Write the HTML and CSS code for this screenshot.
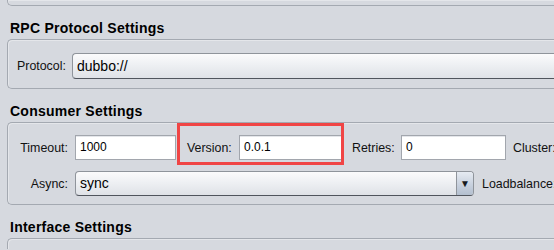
FILE: index.html
```html
<!DOCTYPE html>
<html lang="en">
<head>
  <meta charset="UTF-8">
  <title>Consumer Settings</title>
  <link rel="stylesheet" href="styles.css">
</head>
<body>
  <div class="panel stub"></div>

  <h2 class="section-title">RPC Protocol Settings</h2>
  <div class="panel rpc">
    <div class="row">
      <span class="label protocol-label">Protocol:</span>
      <div class="combo combo-wide">dubbo://</div>
    </div>
  </div>

  <h2 class="section-title">Consumer Settings</h2>
  <div class="panel consumer">
    <div class="row">
      <span class="label col-label">Timeout:</span>
      <div class="field field-timeout">1000</div>
      <span class="label version-label">Version:</span>
      <div class="field field-version">0.0.1</div>
      <span class="label retries-label">Retries:</span>
      <div class="field field-retries">0</div>
      <span class="label cluster-label">Cluster:</span>
    </div>
    <div class="row row-second">
      <span class="label col-label">Async:</span>
      <div class="combo combo-async">
        <span class="combo-text">sync</span>
        <span class="combo-arrow">&#9660;</span>
      </div>
      <span class="label lb-label">Loadbalance:</span>
    </div>
    <div class="highlight"></div>
  </div>

  <h2 class="section-title">Interface Settings</h2>
  <div class="panel tail"></div>
</body>
</html>
```

FILE: styles.css
```css
* {
  margin: 0;
  padding: 0;
  box-sizing: border-box;
}

html, body {
  height: 100%;
  overflow: hidden;
}

body {
  background-color: #d6d9df;
  font-family: "Liberation Sans", Arial, sans-serif;
  color: #000;
}

/* panels run off the right edge in the shot, so no right border */
.panel {
  margin-left: 7px;
  width: calc(100% - 7px);
  overflow: hidden;
  border: 1px solid #a4a9b1;
  border-right: none;
  border-radius: 5px 0 0 5px;
  box-shadow: inset 1px 1px 0 rgba(255, 255, 255, 0.35);
}

.stub {
  height: 6px;
  border-top: none;
  border-radius: 0 0 0 5px;
}

.section-title {
  font-size: 14px;
  font-weight: bold;
  letter-spacing: 0.25px;
  line-height: 17px;
  margin: 14px 0 2px 10px;
}

.rpc {
  padding: 13px 0 9px 9px;
}

.row {
  display: flex;
  align-items: center;
}

.label {
  flex-shrink: 0;
  font-size: 12.4px;
  white-space: nowrap;
  color: #111;
}

.protocol-label {
  width: 55px;
}

.col-label {
  width: 48px;
  text-align: right;
  margin-right: 7px;
}

.combo {
  height: 26px;
  border: 1px solid #8f949b;
  border-bottom-color: #50555d;
  border-radius: 4px;
  background: linear-gradient(#fbfbfc 0%, #eef0f3 45%, #dfe2e7 100%);
  font-size: 14px;
  line-height: 24px;
  padding-left: 4px;
}

.combo-wide {
  flex: 1;
  border-right: none;
  border-radius: 4px 0 0 4px;
}

.consumer {
  position: relative;
  padding: 12px 0 8px 12px;
}

.row-second {
  margin-top: 11px;
}

.field {
  flex-shrink: 0;
  height: 25px;
  background: #fff;
  border: 1px solid #a2a6ad;
  box-shadow: inset 0 1px 0 #e4e6ea;
  font-size: 12px;
  line-height: 23px;
  padding-left: 4px;
}

.field-timeout {
  width: 101px;
}

.version-label {
  width: 52px;
  margin-left: 11px;
}

.field-version {
  width: 103px;
}

.retries-label {
  width: 49px;
  margin-left: 10px;
}

.field-retries {
  width: 105px;
}

.cluster-label {
  margin-left: 7px;
}

.combo-async {
  flex-shrink: 0;
  width: 399px;
  height: 25px;
  display: flex;
  padding-left: 0;
  line-height: 23px;
}

.combo-text {
  flex: 1;
  padding-left: 4px;
}

.combo-arrow {
  width: 17px;
  border-left: 1px solid #8f949b;
  border-radius: 0 3px 3px 0;
  background: linear-gradient(#e6ebf2 0%, #c8d1de 55%, #b3bfcf 100%);
  font-size: 10px;
  text-align: center;
  color: #15181c;
}

.lb-label {
  margin-left: 8px;
}

.highlight {
  position: absolute;
  left: 169px;
  top: 0;
  width: 167px;
  height: 42px;
  border: 3px solid #f04545;
}

.tail {
  height: 11px;
  border-bottom: none;
  border-radius: 5px 0 0 0;
}
```
